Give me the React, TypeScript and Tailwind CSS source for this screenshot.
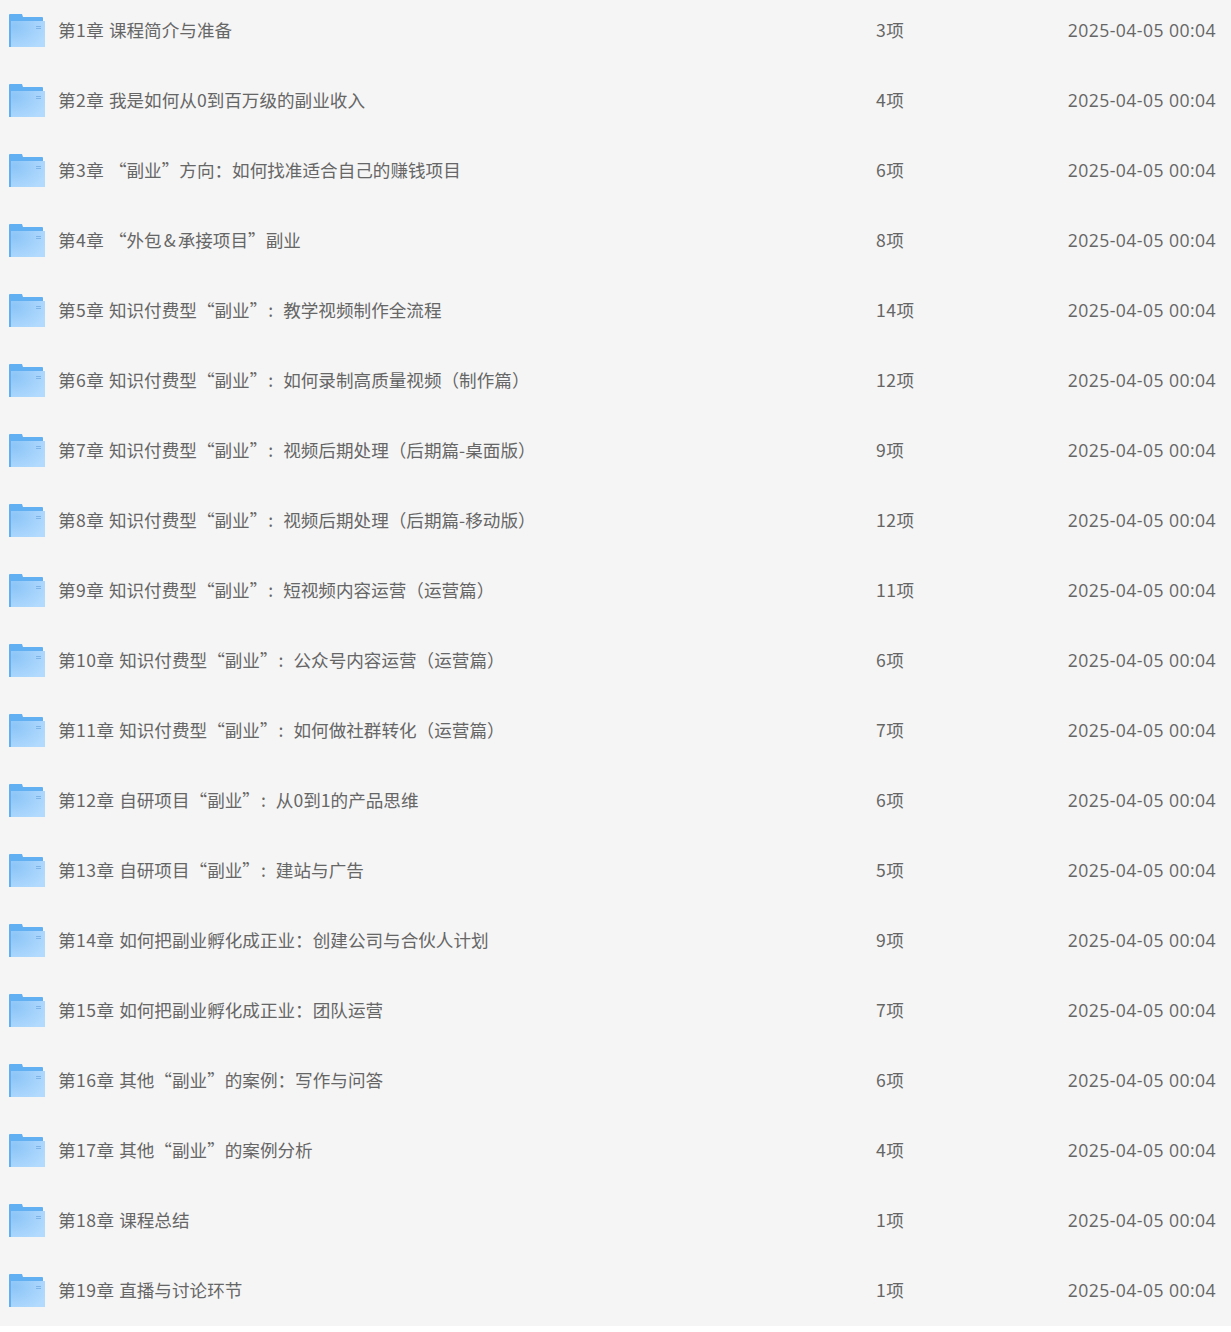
import React from "react";

const chapters: [string, string][] = [
  ["第1章 课程简介与准备", "3项"],
  ["第2章 我是如何从0到百万级的副业收入", "4项"],
  ["第3章 “副业”方向：如何找准适合自己的赚钱项目", "6项"],
  ["第4章 “外包&承接项目”副业", "8项"],
  ["第5章 知识付费型“副业” : 教学视频制作全流程", "14项"],
  ["第6章 知识付费型“副业” : 如何录制高质量视频（制作篇）", "12项"],
  ["第7章 知识付费型“副业” : 视频后期处理（后期篇-桌面版）", "9项"],
  ["第8章 知识付费型“副业” : 视频后期处理（后期篇-移动版）", "12项"],
  ["第9章 知识付费型“副业” : 短视频内容运营（运营篇）", "11项"],
  ["第10章 知识付费型“副业” : 公众号内容运营（运营篇）", "6项"],
  ["第11章 知识付费型“副业” : 如何做社群转化（运营篇）", "7项"],
  ["第12章 自研项目“副业” : 从0到1的产品思维", "6项"],
  ["第13章 自研项目“副业” : 建站与广告", "5项"],
  ["第14章 如何把副业孵化成正业：创建公司与合伙人计划", "9项"],
  ["第15章 如何把副业孵化成正业：团队运营", "7项"],
  ["第16章 其他“副业”的案例：写作与问答", "6项"],
  ["第17章 其他“副业”的案例分析", "4项"],
  ["第18章 课程总结", "1项"],
  ["第19章 直播与讨论环节", "1项"],
];

const FolderIcon = () => (
  <svg width="36" height="33" viewBox="0 0 36 33" className="shrink-0 mt-[1px]">
    <defs>
      <radialGradient id="folderFront" cx="0.1" cy="0.2" r="1">
        <stop offset="0" stopColor="#8cc5f7" />
        <stop offset="1" stopColor="#b2dafe" />
      </radialGradient>
    </defs>
    <path d="M0 1Q0 0 1 0H13L14 3H33Q34 3 34 4V33H0Z" fill="#62b0f2" />
    <rect x="2" y="7" width="34" height="26" fill="url(#folderFront)" />
    <rect x="27" y="12" width="5" height="1" fill="#7fb5e6" />
    <rect x="27" y="14" width="5" height="1" fill="#7fb5e6" />
  </svg>
);

// the source mixes spaced ascii colons and a wider ampersand in its titles
const ChapterName = ({ name }: { name: string }) => {
  const gap = name.indexOf(" ");
  const parts = name.slice(gap + 1).split(/( : |&)/);
  return (
    <>
      <span className="tracking-[0.5px]">{name.slice(0, gap + 1)}</span>
      {parts.map((part, i) =>
        part === " : " ? (
          <span key={i} className="pl-[1px] pr-[10px]">:</span>
        ) : part === "&" ? (
          <span key={i} className="px-[2px]">&amp;</span>
        ) : (
          part
        )
      )}
    </>
  );
};

export default function App() {
  return (
    <div className="h-[1326px] overflow-hidden bg-[#f5f5f5] text-[#666] font-['Microsoft_YaHei','Noto_Sans_CJK_SC',sans-serif] text-[17.6px]">
      {chapters.map(([name, count]) => (
        <div key={name} className="flex items-center h-[60px] mb-[10px] pl-[9px] pr-[15px]">
          <FolderIcon />
          <span className="ml-[13px] w-[818px] whitespace-pre">
            <ChapterName name={name} />
          </span>
          <span className="tracking-[0.5px]">{count}</span>
          <span className="ml-auto whitespace-nowrap tracking-[0.44px] font-['Open_Sans',sans-serif]">2025-04-05 00:04</span>
        </div>
      ))}
    </div>
  );
}
